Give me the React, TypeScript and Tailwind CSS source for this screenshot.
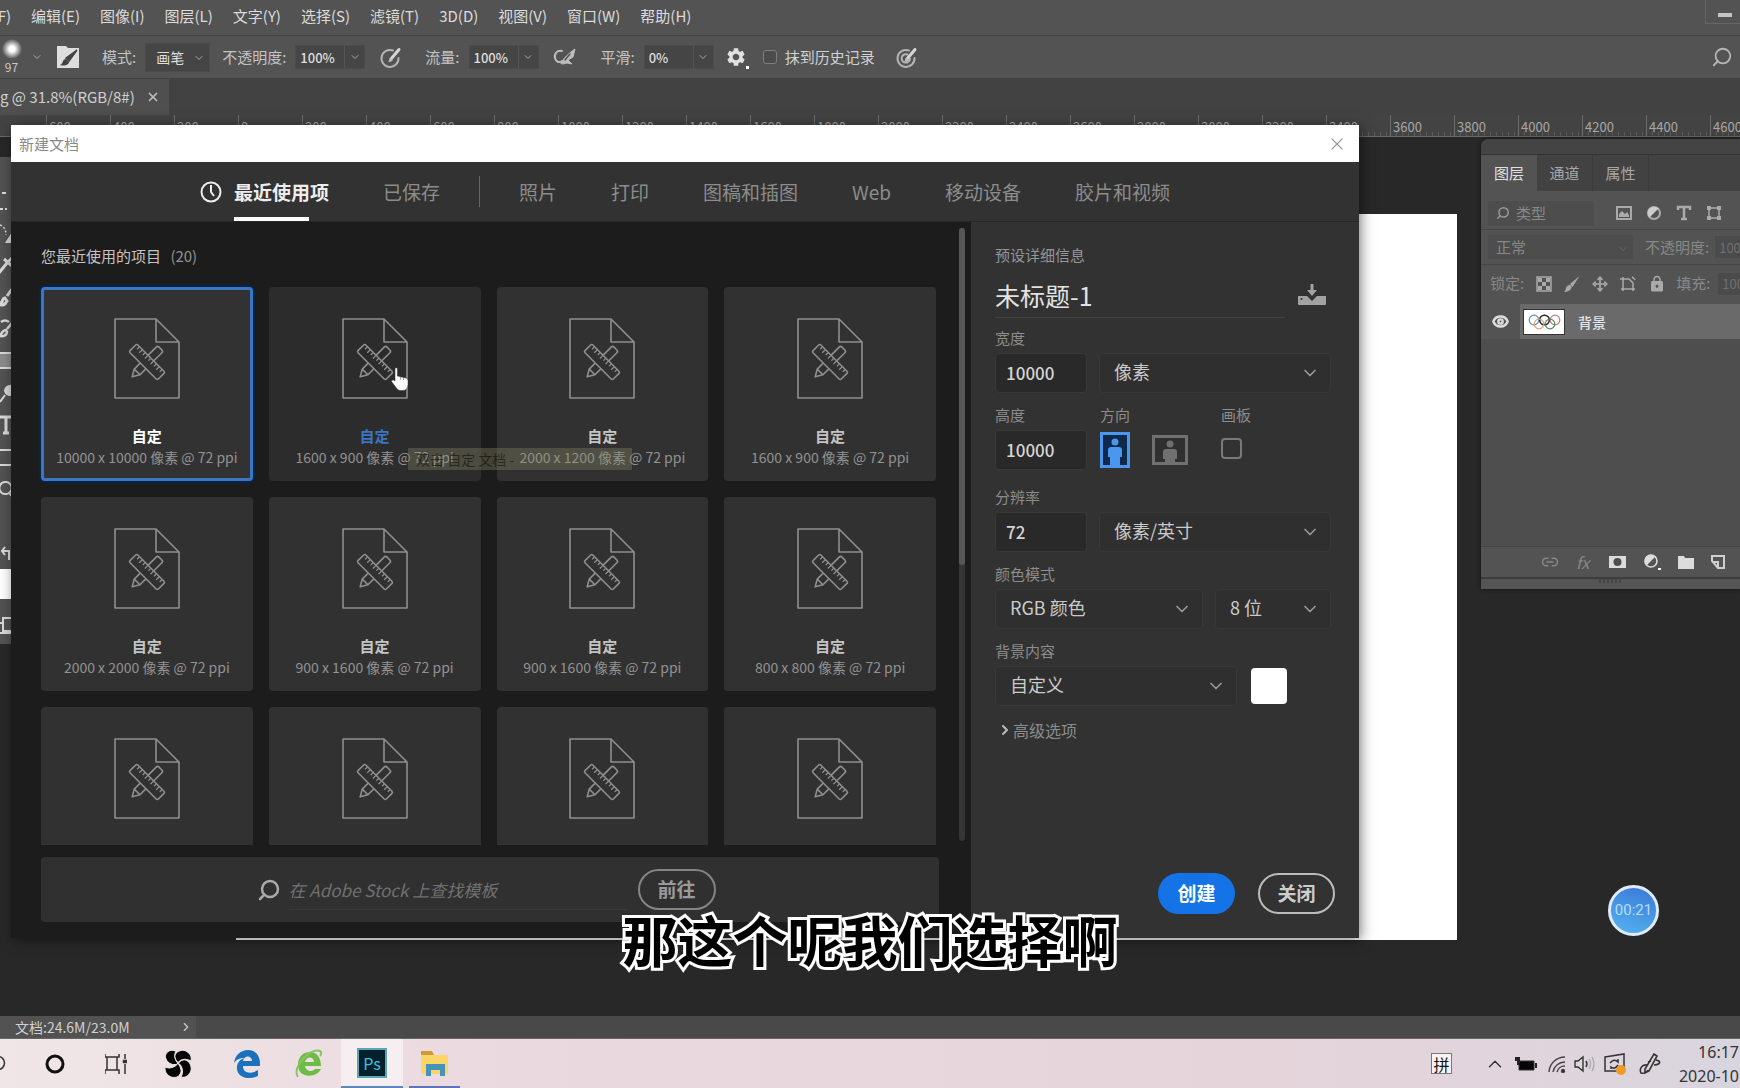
import React from "react";
import { Search, X, Move, Eye, Link2, ChevronDown, ChevronRight, ChevronUp } from "lucide-react";
import { MdSettings, MdLock } from "react-icons/md";

const menus = ["编辑(E)", "图像(I)", "图层(L)", "文字(Y)", "选择(S)", "滤镜(T)", "3D(D)", "视图(V)", "窗口(W)", "帮助(H)"];

const rulerMarks = [600, 400, 200, ...Array.from({ length: 24 }, (_, i) => i * 200)];

const presets = [
  "10000 x 10000 像素 @ 72 ppi",
  "1600 x 900 像素 @ 72 ppi",
  "2000 x 1200 像素 @ 72 ppi",
  "1600 x 900 像素 @ 72 ppi",
  "2000 x 2000 像素 @ 72 ppi",
  "900 x 1600 像素 @ 72 ppi",
  "900 x 1600 像素 @ 72 ppi",
  "800 x 800 像素 @ 72 ppi",
  "",
  "",
  "",
  "",
];

function Divider() {
  return <span className="h-7 w-px shrink-0 bg-[#444]" />;
}

function PenTarget({ inner = false }: { inner?: boolean }) {
  return (
    <svg viewBox="0 0 24 24" className="size-6" fill="none" stroke="#b4b4b4" strokeWidth="2" strokeLinecap="round">
      <path d="M14 5.500A8.500 8.500 0 1 0 19.500 13" />
      {inner && <path d="M12.500 9.500A4.200 4.200 0 1 0 15 14" />}
      <path d="M12 14 20 4.500" strokeWidth="3" stroke="#d6d6d6" />
      <path d="M10 16.500l1-3 2 1.800z" fill="#d6d6d6" strokeWidth="1" />
    </svg>
  );
}

function Airbrush() {
  return (
    <svg viewBox="0 0 24 24" className="size-6" fill="none" stroke="#bdbdbd" strokeWidth="2" strokeLinecap="round" strokeLinejoin="round">
      <path d="M9 6C4 5 1 9 2 13s4 5 7 3" />
      <path d="M8 18c3-5 7-9 14-14l-2 8-5 3 4 4-5-1-4 1z" fill="#bdbdbd" strokeWidth="1" />
      <path d="M12 15l5-6" stroke="#535353" strokeWidth="1.500" />
    </svg>
  );
}

function NumberField({ id, label, value }: { id: string; label: string; value: string }) {
  return (
    <div className="flex items-center gap-[10px]">
      <label htmlFor={id} className="text-[15px] leading-5 text-[#c4c4c4]">{label}</label>
      <div className="flex h-[22px] items-center bg-[#454545] outline outline-[#4b4b4b]">
        <input id={id} defaultValue={value} className="h-full w-12 bg-transparent px-1 text-[13px] font-medium text-[#dedede] outline-none" />
        <button aria-label={label + " 选项"} className="flex h-full w-5 items-center justify-center border-l border-[#555]">
          <ChevronDown className="size-3 text-[#aaa]" />
        </button>
      </div>
    </div>
  );
}

function OptionsBar() {
  return (
    <div className="flex h-[43px] shrink-0 items-center border-b border-[#3f3f3f] bg-[#535353]">
      <button className="flex w-[23px] flex-col items-center text-xs leading-4 text-[#c8c8c8]">
        <span className="size-5 rounded-full bg-[radial-gradient(circle,#fff_20%,#aaa_45%,transparent_72%)]" />
        97
      </button>
      <ChevronDown className="ml-2 size-3 text-[#aaa]" />
      <button aria-label="画笔设置" className="ml-[13px]">
        <svg viewBox="0 0 24 24" className="size-6">
          <path d="M1 1h9l2 2h11v20H1z" fill="#dedede" />
          <path d="M21 5 10 13l3 3z" fill="#444" stroke="#444" strokeWidth="1.500" />
          <path d="M10 14c-4 0-2 4-6 6 4 1.500 9 0 9-3z" fill="#444" />
        </svg>
      </button>
      <div className="ml-3"><Divider /></div>
      <label htmlFor="mode" className="ml-[10px] text-[15px] leading-5 text-[#c4c4c4]">模式:</label>
      <div className="relative ml-[10px]">
        <select id="mode" className="h-[27px] w-[63px] appearance-none bg-[#454545] pl-[10px] text-sm text-[#dedede] outline outline-[#4b4b4b]">
          <option>画笔</option>
        </select>
        <ChevronDown className="pointer-events-none absolute right-1 top-2 size-3 text-[#aaa]" />
      </div>
      <div className="ml-[13px]"><NumberField id="opacity" label="不透明度:" value="100%" /></div>
      <button aria-label="不透明度压力" className="ml-[15px]"><PenTarget /></button>
      <div className="mx-[11px]"><Divider /></div>
      <NumberField id="flow" label="流量:" value="100%" />
      <button aria-label="喷枪" className="ml-[15px]"><Airbrush /></button>
      <div className="mx-3"><Divider /></div>
      <NumberField id="smooth" label="平滑:" value="0%" />
      <button aria-label="平滑选项" className="relative ml-3">
        <MdSettings className="size-[22px] text-[#e0e0e0]" />
        <span className="absolute -bottom-px -right-0.5 size-[3px] bg-white" />
      </button>
      <div className="ml-[10px]"><Divider /></div>
      <label className="ml-[6px] flex items-center gap-2 text-[15px] leading-5 text-[#d2d2d2]">
        <input type="checkbox" className="size-[14px] appearance-none rounded-[3px] border border-[#7d7d7d] bg-[#4b4b4b]" />
        抹到历史记录
      </label>
      <button aria-label="大小压力" className="ml-5"><PenTarget inner /></button>
      <button aria-label="搜索" className="ml-auto mr-[7px]"><Search className="size-[22px] -scale-x-100 text-[#b5b5b5]" /></button>
    </div>
  );
}

function Ruler() {
  return (
    <div className="flex h-[22px] shrink-0 overflow-hidden border-b border-[#6a6a6a] bg-[#434343] pl-[46px]">
      {rulerMarks.map((m, i) => (
        <div key={i} className="flex w-16 shrink-0 flex-col justify-between border-l border-[#6d6d6d] text-[13px] leading-[15px] text-[#a8a8a8]">
          <span className="pl-0.5 pt-1">{m}</span>
          <span className="-mt-0.5 h-1 shrink-0 bg-[repeating-linear-gradient(90deg,transparent_0_5px,#5a5a5a_5px_6px)]" />
        </div>
      ))}
    </div>
  );
}

const toolPaths: React.ReactNode[] = [
  <path key="m" d="M2 5h4M-1 21h8" strokeDasharray="4 2" />,
  <g key="l"><path d="M0 5q6 2 6 10" strokeDasharray="2 2" strokeWidth="1.500" /><path d="M12 12l-7 11h7z" fill="#dadada" stroke="none" /></g>,
  <path key="e" d="M-2 22 7 11M4 7l8 7M8 10l4-4" strokeWidth="3" />,
  <path key="b" d="M12 5 7 12M5 14q-2 0-3 4l-3 2q5 3 8-3z" strokeWidth="3" />,
  <path key="h" d="M12 7 7 13M6 14q-3 0-6 6 6 1 7-4zM1 6q4-3 8 0" strokeWidth="2.500" />,
  <rect key="g" x="-10" y="5" width="26" height="15" fill="#8b8b8b" />,
  <path key="d" d="M0 22l5-7M5 11a5 5 0 1 0 8-5q-7-1-8 5z" fill="#dadada" />,
  <path key="t" d="M-2 5h13M6 5v16M3 21h6" strokeWidth="3" />,
  <rect key="r" x="-10" y="6" width="30" height="15" rx="3" />,
  <path key="z" d="M2 7a6 6 0 1 0 7 10 6 6 0 0 0-7-10M9 17l4 4" />,
];

function ToolStrip() {
  return (
    <div className="absolute left-0 top-5 flex w-[11px] flex-col overflow-hidden bg-[#535353] pt-7">
      {toolPaths.map((p, i) => (
        <button key={i} aria-label="工具" className="h-8 w-[11px]">
          <svg viewBox="0 0 11 26" className="h-[26px] w-[11px]" fill="none" stroke="#dadada" strokeWidth="2">{p}</svg>
        </button>
      ))}
      <svg viewBox="0 0 11 64" className="h-16 w-[11px] shrink-0" fill="none" stroke="#dadada" strokeWidth="2">
        <path d="M2 46h7v9M5 42l-3 4 3 4" />
      </svg>
      <span className="h-[30px] w-[11px] shrink-0 bg-white" />
      <svg viewBox="0 0 11 45" className="h-[45px] w-[11px] shrink-0" fill="none" stroke="#dadada" strokeWidth="2">
        <path d="M11 19H3v13h8M-1 24h4M-1 34h12" />
      </svg>
    </div>
  );
}

function DocIcon() {
  return (
    <svg viewBox="0 0 66 81" className="h-[81px] w-[66px] shrink-0" fill="none" stroke="#8f8f8f" strokeWidth="1.600" strokeLinejoin="round">
      <path d="M1 1h41l23 23v56H1zM42 1v23h23" />
      <g transform="translate(33 44) rotate(45)">
        <path d="M-4-5V-17q0-2 2-2h4q2 0 2 2v12M-4 6v8l4 7 4-7V6M-4 14h8" />
        <rect x="-20" y="-5.500" width="40" height="11" rx="1.500" />
        <path d="M-16-5v3M-12-5v4M-8-5v3M-4-5v4M0-5v3M4-5v4M8-5v3M12-5v4M16-5v3" strokeWidth="1.300" />
      </g>
    </svg>
  );
}

function PresetCard({ size, index }: { size: string; index: number }) {
  const selected = index === 0;
  const hovered = index === 1;
  return (
    <button
      className={
        "flex h-[194px] flex-col items-center rounded pt-[31px] " +
        (selected
          ? "bg-[#323232] shadow-[0_0_0_2px_#06234a] ring-3 ring-inset ring-[#3c76c0]"
          : hovered
            ? "bg-[#2c2c2c]"
            : "bg-[#313131]")
      }
    >
      <DocIcon />
      {size && (
        <>
          <span
            className={
              "mt-[26px] text-[15px] font-bold leading-[22px] " +
              (selected ? "text-white" : hovered ? "text-[#3c76c0]" : "text-[#c4c4c4]")
            }
          >
            自定
          </span>
          <span className="whitespace-nowrap text-sm leading-5 text-[#929292]">{size}</span>
        </>
      )}
    </button>
  );
}

function HandCursor() {
  return (
    <svg viewBox="0 0 18 24" className="h-6 w-[18px]" fill="#fff" stroke="#333" strokeWidth="0.500">
      <path d="M4 1.500q1.200-1.500 2.400 0V9l8.600 2q2 .5 2 2.500v4q0 5-4 6H9q-2 0-4-3l-4.500-6q0-2 2-1.500L4 14z" />
      <path d="M9.500 9.500v3M12.500 10v3" />
    </svg>
  );
}

function DialogTab({ children }: { children: React.ReactNode }) {
  return <button className="h-full text-[19px] leading-7 text-[#8c8c8c]">{children}</button>;
}

function FieldLabel({ htmlFor, children }: { htmlFor?: string; children: React.ReactNode }) {
  return <label htmlFor={htmlFor} className="block text-[15px] leading-5 text-[#8c8c8c]">{children}</label>;
}

function TextField({ id, value }: { id: string; value: string }) {
  return (
    <input
      id={id}
      defaultValue={value}
      className="h-10 w-[92px] rounded border border-[#383838] bg-[#292929] px-[10px] pb-0.5 text-[17px] font-medium text-[#d4d4d4] outline-none"
    />
  );
}

function SelectField({ id, label, value, className }: { id: string; label: string; value: string; className: string }) {
  return (
    <div className={"relative " + className}>
      <select
        id={id}
        aria-label={label}
        className="h-10 w-full appearance-none rounded border border-[#383838] bg-[#2f2f2f] pb-1 pl-[14px] text-lg leading-7 text-[#cacaca] outline-none"
      >
        <option>{value}</option>
      </select>
      <ChevronDown className="pointer-events-none absolute right-[11px] top-[10px] size-5 text-[#999]" />
    </div>
  );
}

function DetailsPane() {
  return (
    <form className="flex w-[388px] shrink-0 flex-col bg-[#323232] px-6 pb-6 pt-[23px]" onSubmit={(e) => e.preventDefault()}>
      <h2 className="text-[15px] leading-5 text-[#959595]">预设详细信息</h2>
      <div className="mt-[7px] flex items-center justify-between pr-[9px]">
        <input
          aria-label="名称"
          defaultValue="未标题-1"
          className="h-[46px] w-[290px] border-b border-[#424242] bg-transparent text-[25px] text-[#e2e2e2] outline-none"
        />
        <button type="button" aria-label="保存预设">
          <svg viewBox="0 0 28 22" className="h-[22px] w-7" fill="#a2a2a2">
            <path d="M0 12h9l5 5 5-5h9v8q0 1-1 1H1q-1 0-1-1z" />
            <path d="M12.500 0h3v6h3.500l-5 6-5-6h3.500z" />
            <circle cx="3.500" cy="15" r="1" fill="#333" />
          </svg>
        </button>
      </div>
      <div className="mt-[10px] flex flex-col gap-[5px]">
        <FieldLabel htmlFor="w">宽度</FieldLabel>
        <div className="flex gap-3">
          <TextField id="w" value="10000" />
          <SelectField id="unit" label="单位" value="像素" className="w-[232px]" />
        </div>
      </div>
      <div className="mt-3 flex">
        <div className="flex w-[105px] flex-col gap-[5px]">
          <FieldLabel htmlFor="h">高度</FieldLabel>
          <TextField id="h" value="10000" />
        </div>
        <fieldset className="w-[121px]">
          <legend className="text-[15px] leading-5 text-[#8c8c8c]">方向</legend>
          <div className="mt-[5px] flex h-10 items-center gap-[22px]">
            <button type="button" aria-label="纵向">
              <svg viewBox="0 0 30 36" className="h-9 w-[30px]">
                <rect x="1.500" y="1.500" width="27" height="33" fill="#10294a" stroke="#4b97ee" strokeWidth="3" />
                <circle cx="15" cy="10" r="3.500" fill="#4b97ee" />
                <path d="M11 15h8q3 0 3 3v7h-2v9H10v-9H8v-7q0-3 3-3z" fill="#4b97ee" />
              </svg>
            </button>
            <button type="button" aria-label="横向">
              <svg viewBox="0 0 36 30" className="h-[30px] w-9">
                <rect x="1.500" y="1.500" width="33" height="27" fill="#303030" stroke="#707070" strokeWidth="3" />
                <circle cx="18" cy="9" r="3.500" fill="#707070" />
                <path d="M14 14h8q3 0 3 3v7h-2v4H13v-4h-2v-7q0-3 3-3z" fill="#707070" />
              </svg>
            </button>
          </div>
        </fieldset>
        <div className="flex flex-col gap-[5px]">
          <FieldLabel htmlFor="artboard">画板</FieldLabel>
          <div className="flex h-10 items-center">
            <input id="artboard" type="checkbox" className="-mt-1 size-[21px] appearance-none rounded-sm border-2 border-[#7a7a7a]" />
          </div>
        </div>
      </div>
      <div className="mt-[17px] flex flex-col gap-[5px]">
        <FieldLabel htmlFor="res">分辨率</FieldLabel>
        <div className="flex gap-3">
          <TextField id="res" value="72" />
          <SelectField id="resunit" label="分辨率单位" value="像素/英寸" className="w-[232px]" />
        </div>
      </div>
      <div className="mt-3 flex flex-col gap-[5px]">
        <FieldLabel htmlFor="color">颜色模式</FieldLabel>
        <div className="flex gap-3">
          <SelectField id="color" label="颜色模式" value="RGB 颜色" className="w-[208px]" />
          <SelectField id="bits" label="位深度" value="8 位" className="w-[116px]" />
        </div>
      </div>
      <div className="mt-3 flex flex-col gap-[5px]">
        <FieldLabel htmlFor="bg">背景内容</FieldLabel>
        <div className="flex items-center gap-[14px]">
          <SelectField id="bg" label="背景内容" value="自定义" className="w-[242px]" />
          <button type="button" aria-label="背景颜色" className="size-9 rounded-sm bg-white" />
        </div>
      </div>
      <button type="button" className="mt-3 flex items-center pl-0.5 text-base leading-6 text-[#8c8c8c]">
        <ChevronRight className="size-4 text-[#bbb]" strokeWidth={3} />
        高级选项
      </button>
      <div className="mt-auto flex justify-end gap-[23px]">
        <button className="h-[41px] w-[77px] rounded-full bg-[#1473e6] text-[19px] font-bold text-white">创建</button>
        <button type="button" className="h-[41px] w-[77px] rounded-full border-2 border-[#bcbcbc] text-[19px] font-bold text-[#cdcdcd]">关闭</button>
      </div>
    </form>
  );
}

function NewDocumentDialog() {
  return (
    <section
      role="dialog"
      aria-label="新建文档"
      className="absolute bottom-[150px] left-[11px] right-[381px] top-[125px] flex flex-col bg-[#1c1c1c] shadow-[2px_2px_12px_rgba(0,0,0,0.5)]"
    >
      <header className="flex h-[37px] shrink-0 items-center justify-between bg-white pl-2 pr-3">
        <h1 className="text-[15px] leading-5 text-[#8a8a8a]">新建文档</h1>
        <button aria-label="关闭窗口"><X className="size-5 text-[#999]" strokeWidth={1.300} /></button>
      </header>
      <nav className="flex h-[60px] shrink-0 items-center justify-center gap-[54px] border-b border-[#262626] bg-[#323232]">
        <button className="relative flex h-full items-center gap-3 text-[19px] font-bold leading-7 text-[#ededed]">
          <svg viewBox="0 0 22 22" className="size-[22px]" fill="none" stroke="#ededed" strokeWidth="2">
            <circle cx="11" cy="11" r="9.500" />
            <path d="M11 4v7l3 4" />
          </svg>
          最近使用项
          <span className="absolute bottom-0 left-[34px] h-1 w-[75px] bg-white" />
        </button>
        <div className="flex h-full items-center gap-[39px]">
          <DialogTab>已保存</DialogTab>
          <span className="h-[31px] w-px bg-[#666]" />
          <DialogTab>照片</DialogTab>
        </div>
        <DialogTab>打印</DialogTab>
        <DialogTab>图稿和插图</DialogTab>
        <DialogTab>Web</DialogTab>
        <DialogTab>移动设备</DialogTab>
        <DialogTab>胶片和视频</DialogTab>
      </nav>
      <div className="flex min-h-0 flex-1">
        <div className="flex min-w-0 flex-1 flex-col">
          <div className="flex min-h-0 flex-1">
            <div className="flex min-w-0 flex-1 flex-col overflow-hidden pl-[30px] pr-[23px] pt-[22px]">
              <h2 className="text-[15px] leading-6 text-[#c4c4c4]">
                您最近使用的项目 <span className="ml-[6px] text-[#929292]">(20)</span>
              </h2>
              <div className="-mx-0.5 min-h-0 flex-1 overflow-hidden px-0.5 pt-[19px]">
                <div className="grid grid-cols-4 gap-4">
                  {presets.map((p, i) => (
                    <PresetCard key={i} size={p} index={i} />
                  ))}
                </div>
              </div>
            </div>
            <div className="mb-1 mr-[6px] mt-[6px] w-[6px] shrink-0 rounded bg-[#353535]">
              <div className="h-[55%] rounded bg-[#575757]" />
            </div>
          </div>
          <form
            className="mb-4 ml-[30px] mr-[32px] mt-3 flex h-[65px] shrink-0 items-center justify-center rounded bg-[#303030] pr-2"
            onSubmit={(e) => e.preventDefault()}
          >
            <Search className="size-6 -scale-x-100 text-[#aaa]" strokeWidth={2.500} />
            <input
              aria-label="在 Adobe Stock 上查找模板"
              placeholder="在 Adobe Stock 上查找模板"
              className="ml-2 h-10 w-[338px] border-b border-[#3a3a3a] bg-transparent text-[17px] italic outline-none placeholder:text-[#707070]"
            />
            <button className="ml-[11px] h-[41px] w-[78px] rounded-full border-2 border-[#858585] text-[19px] font-bold text-[#9a9a9a]">前往</button>
          </form>
        </div>
        <DetailsPane />
      </div>
      <div
        role="tooltip"
        className="absolute left-[397px] top-[323px] h-[22px] w-[224px] whitespace-pre bg-[#8d8a66]/35 pl-2 text-sm leading-[22px] text-black/50"
      >
        双击 自定 文档 -
      </div>
      <div className="pointer-events-none absolute left-[380px] top-[242px]"><HandCursor /></div>
    </section>
  );
}

function LayersPanel() {
  const ic = "size-4 shrink-0";
  return (
    <aside className="absolute right-0 top-[2px] w-[259px] overflow-hidden rounded-tl-lg bg-[#535353] text-[15px] shadow-[0_0_4px_#111]">
      <div className="h-4 border-b border-[#333] bg-[#444]" />
      <div className="flex h-9 bg-[#424242]">
        <button className="w-14 bg-[#535353] text-[#e0e0e0]">图层</button>
        <button className="w-14 border-r border-[#3a3a3a] text-[#a8a8a8]">通道</button>
        <button className="w-14 border-r border-[#3a3a3a] text-[#a8a8a8]">属性</button>
      </div>
      <div className="flex h-[39px] items-center gap-[14px] border-b border-[#454545] pl-[7px] pt-[6px]">
        <label className="mr-2 flex h-[25px] w-[106px] shrink-0 items-center gap-[6px] bg-[#4d4d4d] pl-2 text-[#888]">
          <Search className="size-[14px] -scale-x-100 text-[#999]" strokeWidth={2.500} />
          <select aria-label="过滤类型" className="appearance-none bg-transparent outline-none"><option>类型</option></select>
        </label>
        <svg viewBox="0 0 16 16" className={ic}><rect x="1" y="2" width="14" height="12" fill="none" stroke="#aaa" strokeWidth="2" /><path d="M3 12V9l3-3 3 3 2-2 2 3v2z" fill="#aaa" /></svg>
        <svg viewBox="0 0 16 16" className={ic}><circle cx="8" cy="8" r="6" fill="none" stroke="#aaa" strokeWidth="2" /><path d="M12.500 3.500a6 6 0 0 0-9 9z" fill="#ccc" /></svg>
        <svg viewBox="0 0 16 16" className={ic}><path d="M2 5V2h12v3M8 2v12M5 14h6" fill="none" stroke="#aaa" strokeWidth="2.500" /></svg>
        <svg viewBox="0 0 16 16" className={ic}><path d="M3 3h10v10H3z" fill="none" stroke="#aaa" strokeWidth="1.500" /><path d="M1 1h4v4H1zM11 1h4v4h-4zM1 11h4v4H1zM11 11h4v4h-4z" fill="#aaa" /></svg>
      </div>
      <div className="flex h-[35px] items-center border-b border-[#454545] pl-[7px] text-[#888]">
        <div className="relative">
          <select aria-label="混合模式" className="h-6 w-[145px] appearance-none bg-[#4d4d4d] pl-2 leading-6 outline-none"><option>正常</option></select>
          <ChevronDown className="pointer-events-none absolute right-1 top-2 size-3 text-[#666]" />
        </div>
        <label htmlFor="lop" className="ml-3 shrink-0">不透明度:</label>
        <input id="lop" defaultValue="100" className="ml-[6px] h-[22px] w-8 min-w-0 bg-[#4b4b4b] pl-1 text-[13px] text-[#707070] outline-none" />
      </div>
      <div className="flex h-[39px] items-center pb-0.5 pl-[9px] text-[#888]">
        <span className="mr-3 shrink-0">锁定:</span>
        <span className="flex shrink-0 items-center gap-3">
          <svg viewBox="0 0 16 16" className={ic}><rect x="1" y="1" width="14" height="14" fill="none" stroke="#aaa" strokeWidth="1.500" /><path d="M2 2h4v4H2zM10 2h4v4h-4zM6 6h4v4H6zM2 10h4v4H2zM10 10h4v4h-4z" fill="#aaa" /></svg>
          <svg viewBox="0 0 16 16" className={ic}><path d="M15.500 0 6 8l2.500 3zM5 9q3 0 2.500 3-2 4-7.500 4 2-2 2-4t3-3z" fill="#aaa" /></svg>
          <Move className={ic + " text-[#aaa]"} strokeWidth={2.500} />
          <svg viewBox="0 0 16 16" className={ic} fill="none" stroke="#aaa" strokeWidth="1.500"><path d="M3 1v14M0 3h9l4 4v8M1 13h14" /><path d="M12 1q2 1 3 3" /></svg>
          <MdLock className="size-[18px] text-[#aaa]" />
        </span>
        <label htmlFor="lfill" className="ml-[10px] shrink-0">填充:</label>
        <input id="lfill" defaultValue="100" className="ml-2 h-[22px] w-8 min-w-0 bg-[#4b4b4b] pl-1 text-[13px] text-[#707070] outline-none" />
      </div>
      <div className="flex h-[35px]">
        <button aria-label="可见性" className="flex w-[39px] items-center justify-center"><Eye className="size-[17px] text-[#ddd]" strokeWidth={3.500} /></button>
        <button className="flex flex-1 items-center gap-[14px] bg-[#6a6a6a] pl-1 text-sm font-medium text-[#e4e4e4]">
          <svg viewBox="0 0 40 24" className="h-6 w-10 bg-white outline outline-[#333]" fill="none" strokeWidth="1.200">
            <circle cx="10" cy="10" r="4.800" stroke="#5b8fb5" />
            <circle cx="20.500" cy="10" r="4.800" stroke="#222" strokeWidth="1.600" />
            <circle cx="31" cy="10" r="4.800" stroke="#c27a86" />
            <circle cx="15" cy="14" r="4.800" stroke="#d9a17c" />
            <circle cx="26" cy="14" r="4.800" stroke="#4c8a58" />
          </svg>
          背景
        </button>
      </div>
      <div className="h-[208px] border-b border-[#454545] bg-[#4e4e4e]" />
      <div className="flex h-8 items-center border-b-2 border-[#3c3c3c] pl-[60px]">
        <div className="flex shrink-0 items-center gap-[17px]">
          <Link2 className="size-[18px] text-[#888]" strokeWidth={2} />
          <i className="w-4 text-base leading-5 text-[#888]">fx</i>
          <svg viewBox="0 0 17 14" className="h-[14px] w-[17px]"><path d="M0 1h17v12H0z" fill="#dcdcdc" /><circle cx="8.500" cy="7" r="4" fill="#4e4e4e" /></svg>
          <svg viewBox="0 0 18 18" className="size-[18px]"><circle cx="8" cy="8" r="6" fill="none" stroke="#ddd" strokeWidth="1.600" /><path d="M12.500 3.500a6 6 0 0 0-9 9z" fill="#ddd" /><path d="M15 15h3v2h-3z" fill="#fff" /></svg>
          <svg viewBox="0 0 16 14" className="h-[14px] w-4"><path d="M0 1h6l1 2h9v11H0z" fill="#dcdcdc" /></svg>
          <svg viewBox="0 0 14 14" className="size-[14px]" fill="none" stroke="#d0d0d0" strokeWidth="2"><path d="M1 6V1h12v12H7zM1 7h6v6" /></svg>
        </div>
      </div>
      <div className="flex h-[10px] justify-center bg-[#555]"><span className="h-1 w-6 bg-[repeating-linear-gradient(90deg,#444_0_2px,transparent_2px_4px)]" /></div>
    </aside>
  );
}

function Taskbar() {
  return (
    <footer className="flex h-[49px] shrink-0 items-center overflow-hidden bg-[linear-gradient(90deg,#f0e6e7,#ead9df_30%,#e6d5da_65%,#e2d4dc_85%,#d8d5de)]">
      <svg viewBox="0 0 6 16" className="h-4 w-[6px]" fill="none" stroke="#333" strokeWidth="1.500"><circle cx="-2" cy="7" r="6.500" /></svg>
      <button aria-label="Cortana" className="ml-[39px]"><svg viewBox="0 0 20 20" className="size-5"><circle cx="10" cy="10" r="8" fill="none" stroke="#111" strokeWidth="3" /></svg></button>
      <button aria-label="任务视图" className="ml-10">
        <svg viewBox="0 0 22 22" className="size-[22px]" fill="none" stroke="#333" strokeWidth="1.500"><path d="M0 1v3h14V1M2 4v13M12 4v13M0 21v-4h14v4M20 1v5M20 11v10" /><path d="M18.500 7.500h3v2h-3z" fill="#333" /></svg>
      </button>
      <button aria-label="应用" className="ml-[37px]">
        <svg viewBox="0 0 28 30" className="h-[30px] w-7" fill="#050505" stroke="#eadfe3" strokeWidth="1.200">
          <path d="M15 15Q7 17 3 12C-2 5 5-1 12 2Q9 9 15 15z" />
          <path d="M14 14Q8 7 13 3C20-2 29 4 27 12Q19 8 14 14z" />
          <path d="M14 14Q20 8 25 13C31 21 24 30 17 28Q21 20 14 14z" />
          <path d="M14 14Q20 22 15 27C9 31 0 27 1 18Q9 21 14 14z" />
        </svg>
      </button>
      <button aria-label="Edge" className="ml-[41px]">
        <svg viewBox="0 0 28 28" className="size-7"><path d="M1 13C2 5 8 0 15 0c8 0 12 6 12 14v2H10c0 8 9 8 15 4v6C14 31 3 26 4 17c0-4 3-8 8-9-6 0-9 2-11 5zM10 11h9c0-6-8-6-9 0z" fill="#1a72bd" /></svg>
      </button>
      <button aria-label="浏览器" className="ml-[34px]">
        <svg viewBox="0 0 28 30" className="h-[30px] w-7">
          <path d="M3 16C3 7 9 3 15 3c7 0 11 6 11 14H10c1 6 8 6 10 3h6c-4 9-23 10-23-4zM10 13h9c0-6-8-6-9 0z" fill="#6cbc45" />
          <path d="M3 28C-4 18 16-2 25 2c2 1 1 4 0 5" fill="none" stroke="#8ac465" strokeWidth="2" />
        </svg>
      </button>
      <button aria-label="Photoshop" className="ml-[18px] flex h-full w-[62px] items-center justify-center border-b-2 border-[#5f87ba] bg-[#f6eef1]">
        <span className="flex size-[30px] items-center justify-center border-2 border-[#5aa7b4] bg-[#04202d] text-base leading-5 text-[#3fc3dd]">Ps</span>
      </button>
      <button aria-label="文件资源管理器" className="ml-[6px] flex h-full w-[51px] items-center justify-center border-b-2 border-[#5f74b8]">
        <svg viewBox="0 0 28 26" className="h-[26px] w-7"><path d="M0 1h11l2 4H0z" fill="#cf9a32" /><path d="M0 5h27v19H0z" fill="#fbd568" /><path d="M5 26V14h19v12h-5v-6h-9v6z" fill="#4593b6" /></svg>
      </button>
      <div className="ml-auto flex shrink-0 items-center text-[#333]">
        <button className="flex size-[21px] items-center justify-center border border-[#777] bg-[#f8f4f6] text-base leading-5 text-[#111]">拼</button>
        <button aria-label="显示隐藏的图标" className="ml-8"><ChevronUp className="size-[22px]" strokeWidth={1.500} /></button>
        <svg viewBox="0 0 22 16" className="ml-[9px] h-4 w-[22px]"><path d="M4 5h15v9H4z" fill="#050505" stroke="#333" /><path d="M20 7h2v5h-2zM0 1h5v4H0zM2 5h2v4H2z" fill="#222" /></svg>
        <svg viewBox="0 0 18 18" className="ml-[11px] size-[18px]" fill="none" stroke="#444" strokeWidth="1.400"><path d="M1 17A16 16 0 0 1 17 2M5 17A12 12 0 0 1 17 7M9 17A8 8 0 0 1 17 11" /><circle cx="15" cy="16" r="1.500" fill="#222" /></svg>
        <svg viewBox="0 0 22 18" className="ml-2 h-[18px] w-[22px]" fill="none" stroke="#333" strokeWidth="1.400"><path d="M1 6h3l5-4v14l-5-4H1z" /><path d="M12 6q2 3 0 6" /><path d="M15 4q3 5 0 10M18 2q4 7 0 14" stroke="#aaa" /></svg>
        <svg viewBox="0 0 22 22" className="ml-2 size-[22px]" fill="none" stroke="#333" strokeWidth="1.500"><path d="M1 4l19-3v17H1zM6 10q4-5 8-1V6M14 12q-3 5-7 2v2" /><circle cx="17" cy="17" r="5" fill="#f09a28" stroke="none" /></svg>
        <svg viewBox="0 0 22 22" className="ml-[13px] size-[22px]" fill="none" stroke="#333" strokeWidth="1.600"><path d="M15 1l3 2-8 15-4 2v-4zM8 12c-5-1-8 4-6 8 3 1 6-1 7-3M9 9l3-1M15 12c4 0 7-2 5-4l-3-1" /></svg>
        <time className="ml-[16px] w-[63px] whitespace-nowrap pr-px text-right font-['Noto_Sans'] text-base leading-6">16:17<br />2020-10</time>
      </div>
    </footer>
  );
}

export default function App() {
  return (
    <div className="relative flex h-screen flex-col overflow-hidden bg-[#282828] font-['Noto_Sans_CJK_SC',sans-serif]">
      <div className="flex h-9 shrink-0 items-center border-b border-[#434343] bg-[#535353]">
        <nav className="flex flex-1 items-center gap-5 pb-[3px] text-[15px] leading-6 text-[#dcdcdc]">
          <button className="flex w-[11px] justify-end">F)</button>
          {menus.map((m) => (
            <button key={m} className="whitespace-nowrap">{m}</button>
          ))}
        </nav>
        <button aria-label="最小化" className="flex h-6 w-[35px] items-center self-start border-b border-l border-[#666] pl-3 pt-1.5">
          <span className="h-1 w-[14px] bg-[#c4c4c4]" />
        </button>
      </div>
      <OptionsBar />
      <div className="flex h-9 shrink-0 bg-[#424242]">
        <div className="flex items-center gap-[11px] bg-[#4f4f4f] pr-[9px] text-[15px] text-[#d0d0d0]">
          g @ 31.8%(RGB/8#)
          <button aria-label="关闭文档"><X className="size-[14px] text-[#bbb]" strokeWidth={3} /></button>
        </div>
      </div>
      <Ruler />
      <main className="relative flex-1">
        <div className="absolute bottom-[76px] left-[236px] right-[283px] top-[77px] bg-white" />
        <ToolStrip />
        <LayersPanel />
      </main>
      <div className="flex h-[23px] shrink-0 items-center border-b border-[#666] bg-[#4a4949]">
        <div className="flex h-full w-[196px] items-center justify-between bg-[#525252] pl-[15px] pr-[3px] text-sm leading-5 text-[#d0d0d0]">
          <span>文档:24.6M/23.0M</span>
          <ChevronRight className="size-[14px] text-[#ccc]" strokeWidth={2} />
        </div>
      </div>
      <Taskbar />
      <NewDocumentDialog />
      <div className="absolute bottom-[152px] right-[81px] flex size-[51px] items-center justify-center rounded-full border-[3px] border-[#dfeafb] bg-[linear-gradient(20deg,#55b3ee,#3a78d8)] font-['Roboto'] text-[15px] text-[#b5dcff]">
        00:21
      </div>
      <p className="pointer-events-none absolute inset-x-0 bottom-[118px] text-center text-[55px] font-bold leading-[64px] text-black [-webkit-text-stroke:6px_white] [paint-order:stroke_fill]">
        那这个呢我们选择啊
      </p>
    </div>
  );
}
